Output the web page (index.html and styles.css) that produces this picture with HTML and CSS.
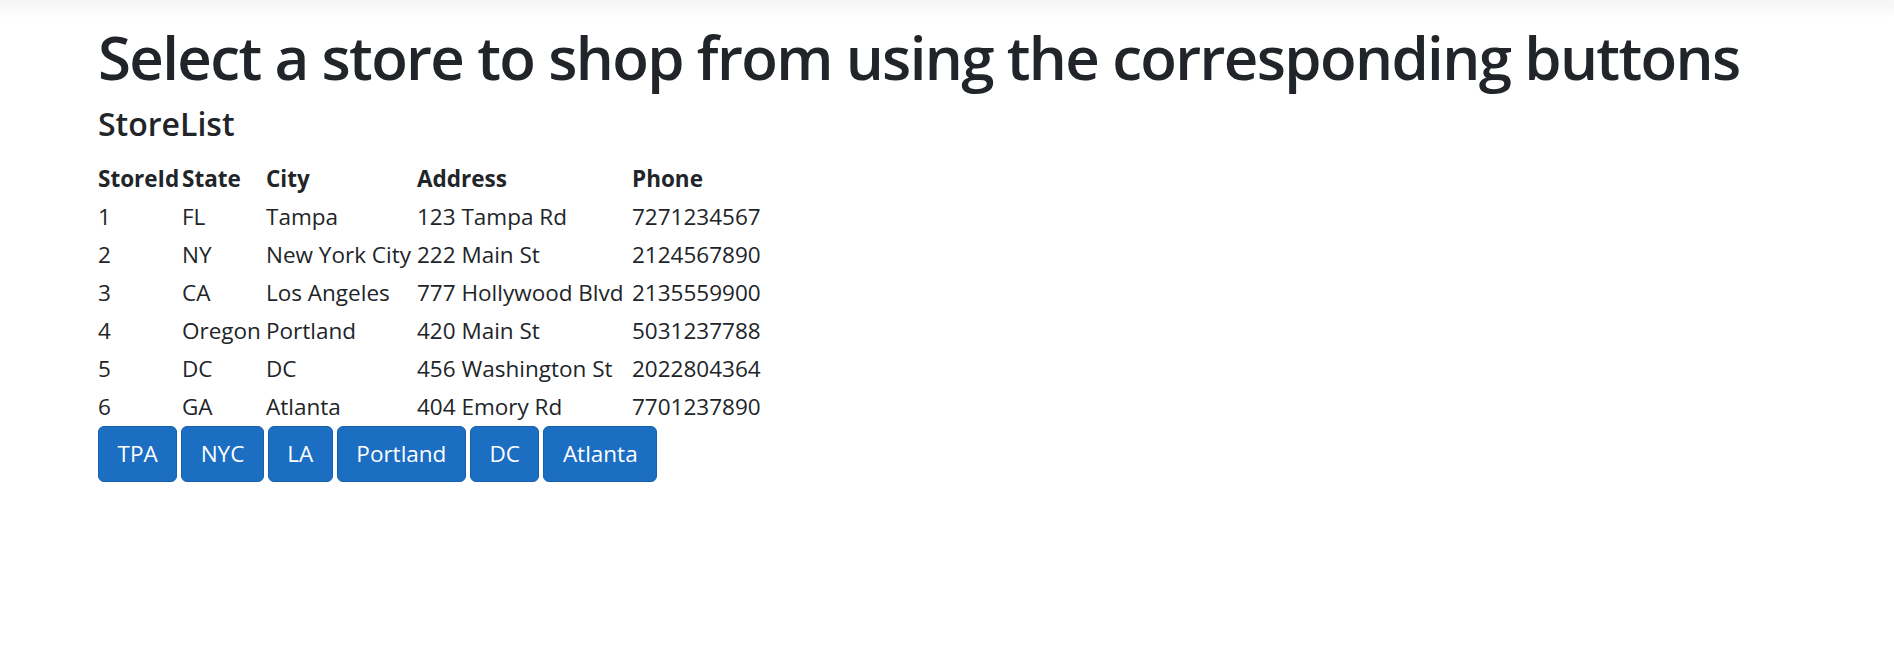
FILE: index.html
```html
<!DOCTYPE html>
<html lang="en">
<head>
<meta charset="utf-8">
<title>Stores</title>
<link rel="stylesheet" href="styles.css">
</head>
<body>
<div class="top-shade"></div>
<main class="content">
  <h1 class="title">Select a store to shop from using the corresponding buttons</h1>
  <h3 class="subtitle">StoreList</h3>
  <table class="stores">
    <colgroup>
      <col class="c-id"><col class="c-state"><col class="c-city"><col class="c-addr"><col class="c-phone">
    </colgroup>
    <thead>
      <tr><th>StoreId</th><th>State</th><th>City</th><th>Address</th><th>Phone</th></tr>
    </thead>
    <tbody>
      <tr><td>1</td><td>FL</td><td>Tampa</td><td>123 Tampa Rd</td><td>7271234567</td></tr>
      <tr><td>2</td><td>NY</td><td>New York City</td><td>222 Main St</td><td>2124567890</td></tr>
      <tr><td>3</td><td>CA</td><td>Los Angeles</td><td>777 Hollywood Blvd</td><td>2135559900</td></tr>
      <tr><td>4</td><td>Oregon</td><td>Portland</td><td>420 Main St</td><td>5031237788</td></tr>
      <tr><td>5</td><td>DC</td><td>DC</td><td>456 Washington St</td><td>2022804364</td></tr>
      <tr><td>6</td><td>GA</td><td>Atlanta</td><td>404 Emory Rd</td><td>7701237890</td></tr>
    </tbody>
  </table>
  <div class="buttons">
    <button class="btn">TPA</button>
    <button class="btn">NYC</button>
    <button class="btn">LA</button>
    <button class="btn">Portland</button>
    <button class="btn">DC</button>
    <button class="btn">Atlanta</button>
  </div>
</main>
</body>
</html>
```

FILE: styles.css
```css
html, body {
  margin: 0;
  padding: 0;
  background: #ffffff;
  color: #212529;
  font-family: "Open Sans", "Noto Sans", sans-serif;
  font-size: 22.5px;
  line-height: 36px;
}

.top-shade {
  height: 18px;
  background: linear-gradient(to bottom, #f6f6f6 0px, #f7f7f7 6px, #ffffff 18px);
}

.content {
  padding: 3px 0 0 98px;
}

.title {
  margin: 0 0 12px 0;
  font-size: 60px;
  font-weight: 600;
  line-height: 1.2;
  letter-spacing: -1.65px;
}

.subtitle {
  margin: 0 0 17px 0;
  font-size: 32px;
  font-weight: 600;
  line-height: 1.2;
  letter-spacing: 0;
}

.stores {
  border-collapse: collapse;
  table-layout: fixed;
  width: 680px;
}

.c-id { width: 84px; }
.c-state { width: 84px; }
.c-city { width: 151px; }
.c-addr { width: 215px; }
.c-phone { width: 146px; }

.stores th,
.stores td {
  padding: 1px 1.5px 1px 0;
  text-align: left;
  vertical-align: top;
  white-space: nowrap;
}

.stores th {
  font-weight: 700;
}

.buttons {
  display: flex;
  gap: 4px;
}

.btn {
  font-family: inherit;
  font-size: 22.5px;
  line-height: 36px;
  padding: 9px 18.5px;
  color: #ffffff;
  background: #1b6ec2;
  border: 1.5px solid #1861ac;
  border-radius: 6px;
}
```
